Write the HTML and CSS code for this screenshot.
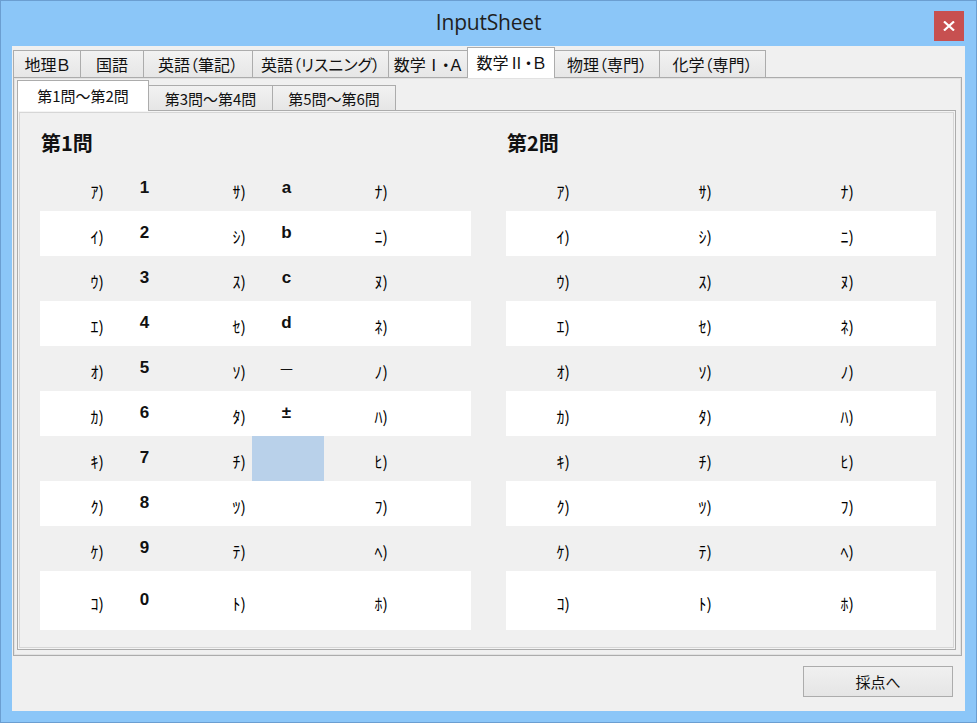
FILE: index.html
```html
<!DOCTYPE html>
<html lang="ja">
<head>
<meta charset="utf-8">
<title>InputSheet</title>
<link rel="stylesheet" href="styles.css">
</head>
<body>
<div class="window">
  <div class="titlebar">
    <div class="title">InputSheet</div>
    <div class="close">
      <svg width="12" height="10" viewBox="0 0 12 10"><path d="M1 0.5 L11 9.5 M11 0.5 L1 9.5" stroke="#fff" stroke-width="2.2" fill="none"/></svg>
    </div>
  </div>
  <div class="client">
    <div class="tabstrip outer">
      <div class="tab">地理Ｂ</div>
      <div class="tab">国語</div>
      <div class="tab">英語（筆記）</div>
      <div class="tab">英語（リスニング）</div>
      <div class="tab">数学Ⅰ・Ａ</div>
      <div class="tab active">数学Ⅱ・Ｂ</div>
      <div class="tab">物理（専門）</div>
      <div class="tab">化学（専門）</div>
    </div>
    <div class="panel">
      <div class="tabstrip inner">
        <div class="itab active">第1問〜第2問</div>
        <div class="itab">第3問〜第4問</div>
        <div class="itab">第5問〜第6問</div>
      </div>
      <div class="ipanel">
        <div class="content">
          <div class="section">
            <h2 class="heading">第1問</h2>
            <div class="table">
              <div class="row"><div class="lab">ｱ)</div><div class="ans">1</div><div class="lab">ｻ)</div><div class="ans">a</div><div class="lab">ﾅ)</div><div class="ans"></div></div>
              <div class="row"><div class="lab">ｲ)</div><div class="ans">2</div><div class="lab">ｼ)</div><div class="ans">b</div><div class="lab">ﾆ)</div><div class="ans"></div></div>
              <div class="row"><div class="lab">ｳ)</div><div class="ans">3</div><div class="lab">ｽ)</div><div class="ans">c</div><div class="lab">ﾇ)</div><div class="ans"></div></div>
              <div class="row"><div class="lab">ｴ)</div><div class="ans">4</div><div class="lab">ｾ)</div><div class="ans">d</div><div class="lab">ﾈ)</div><div class="ans"></div></div>
              <div class="row"><div class="lab">ｵ)</div><div class="ans">5</div><div class="lab">ｿ)</div><div class="ans dash">－</div><div class="lab">ﾉ)</div><div class="ans"></div></div>
              <div class="row"><div class="lab">ｶ)</div><div class="ans">6</div><div class="lab">ﾀ)</div><div class="ans">±</div><div class="lab">ﾊ)</div><div class="ans"></div></div>
              <div class="row"><div class="lab">ｷ)</div><div class="ans">7</div><div class="lab">ﾁ)</div><div class="ans selected"></div><div class="lab">ﾋ)</div><div class="ans"></div></div>
              <div class="row"><div class="lab">ｸ)</div><div class="ans">8</div><div class="lab">ﾂ)</div><div class="ans"></div><div class="lab">ﾌ)</div><div class="ans"></div></div>
              <div class="row"><div class="lab">ｹ)</div><div class="ans">9</div><div class="lab">ﾃ)</div><div class="ans"></div><div class="lab">ﾍ)</div><div class="ans"></div></div>
              <div class="row tall"><div class="lab">ｺ)</div><div class="ans">0</div><div class="lab">ﾄ)</div><div class="ans"></div><div class="lab">ﾎ)</div><div class="ans"></div></div>
            </div>
          </div>
          <div class="section">
            <h2 class="heading">第2問</h2>
            <div class="table">
              <div class="row"><div class="lab">ｱ)</div><div class="ans"></div><div class="lab">ｻ)</div><div class="ans"></div><div class="lab">ﾅ)</div><div class="ans"></div></div>
              <div class="row"><div class="lab">ｲ)</div><div class="ans"></div><div class="lab">ｼ)</div><div class="ans"></div><div class="lab">ﾆ)</div><div class="ans"></div></div>
              <div class="row"><div class="lab">ｳ)</div><div class="ans"></div><div class="lab">ｽ)</div><div class="ans"></div><div class="lab">ﾇ)</div><div class="ans"></div></div>
              <div class="row"><div class="lab">ｴ)</div><div class="ans"></div><div class="lab">ｾ)</div><div class="ans"></div><div class="lab">ﾈ)</div><div class="ans"></div></div>
              <div class="row"><div class="lab">ｵ)</div><div class="ans"></div><div class="lab">ｿ)</div><div class="ans"></div><div class="lab">ﾉ)</div><div class="ans"></div></div>
              <div class="row"><div class="lab">ｶ)</div><div class="ans"></div><div class="lab">ﾀ)</div><div class="ans"></div><div class="lab">ﾊ)</div><div class="ans"></div></div>
              <div class="row"><div class="lab">ｷ)</div><div class="ans"></div><div class="lab">ﾁ)</div><div class="ans"></div><div class="lab">ﾋ)</div><div class="ans"></div></div>
              <div class="row"><div class="lab">ｸ)</div><div class="ans"></div><div class="lab">ﾂ)</div><div class="ans"></div><div class="lab">ﾌ)</div><div class="ans"></div></div>
              <div class="row"><div class="lab">ｹ)</div><div class="ans"></div><div class="lab">ﾃ)</div><div class="ans"></div><div class="lab">ﾍ)</div><div class="ans"></div></div>
              <div class="row tall"><div class="lab">ｺ)</div><div class="ans"></div><div class="lab">ﾄ)</div><div class="ans"></div><div class="lab">ﾎ)</div><div class="ans"></div></div>
            </div>
          </div>
        </div>
      </div>
    </div>
    <div class="footer">
      <button class="btn">採点へ</button>
    </div>
  </div>
</div>
</body>
</html>
```
FILE: styles.css
```css
html, body {
  margin: 0;
  padding: 0;
}
body {
  width: 977px;
  height: 723px;
  overflow: hidden;
  font-family: "Noto Sans CJK JP", "Noto Sans", sans-serif;
  color: #000;
}
.window {
  box-sizing: border-box;
  width: 977px;
  height: 723px;
  background: #8bc6f8;
  border: 1px solid #6b9ed1;
  padding: 0 11px 11px 11px;
  display: flex;
  flex-direction: column;
}
.titlebar {
  height: 45px;
  flex: none;
  display: grid;
  grid-template-columns: 1fr auto 1fr;
  align-items: start;
}
.title {
  grid-column: 2;
  font-family: "Open Sans", "Noto Sans", sans-serif;
  font-size: 21px;
  line-height: 24px;
  margin-top: 9px;
  letter-spacing: -0.2px;
  color: #1f1f1f;
}
.close {
  grid-column: 3;
  justify-self: end;
  width: 30px;
  height: 30px;
  margin-top: 10px;
  margin-right: 1px;
  background: #c75050;
  display: flex;
  align-items: center;
  justify-content: center;
}
.close svg { display: block; }

.client {
  flex: 1;
  background: #f0f0f0;
  padding: 1px 0 0 1px;
  display: flex;
  flex-direction: column;
}

.tabstrip {
  display: flex;
  align-items: flex-end;
  flex: none;
}
.tabstrip.outer { height: 30px; }
.tab, .itab {
  box-sizing: border-box;
  border: 1px solid #acacac;
  border-bottom: none;
  margin-right: -1px;
  background: linear-gradient(#f2f2f2, #e6e6e6);
  display: flex;
  align-items: center;
  justify-content: center;
  line-height: 1;
  white-space: nowrap;
  font-feature-settings: "palt";
  color: #111;
}
.tab { height: 27px; font-size: 16px; }
.tab.active, .itab.active {
  background: #fff;
  position: relative;
  z-index: 1;
  margin-bottom: -1px;
}
.tab.active { height: 31px; padding-bottom: 3px; }
.tab:nth-child(1) { width: 68px; }
.tab:nth-child(2) { width: 64px; }
.tab:nth-child(3) { width: 110px; }
.tab:nth-child(4) { width: 137px; }
.tab:nth-child(5) { width: 80px; }
.tab:nth-child(6) { width: 88px; }
.tab:nth-child(7) { width: 106px; }
.tab:nth-child(8) { width: 107px; }

.panel {
  box-sizing: border-box;
  width: 949px;
  height: 579px;
  flex: none;
  border: 1px solid #acacac;
  box-shadow: inset 0 0 0 1px #e2e2e2;
  background: #f0f0f0;
  padding: 2px 5px 5px 3px;
  display: flex;
  flex-direction: column;
}
.tabstrip.inner { height: 30px; }
.itab { height: 25px; font-size: 15px; }
.itab.active { height: 31px; padding-bottom: 2px; }
.itab:nth-child(1) { width: 132px; }
.itab:nth-child(2) { width: 125px; }
.itab:nth-child(3) { width: 124px; }

.ipanel {
  box-sizing: border-box;
  width: 939px;
  height: 540px;
  border: 1px solid #acacac;
  box-shadow: inset 0 0 0 1px #f4f4f4, inset 0 0 0 2px #d6d6d6;
  background: #f0f0f0;
}
.content {
  display: grid;
  grid-template-columns: 431px 430px;
  column-gap: 35px;
  padding: 19px 0 0 22px;
}
.heading {
  margin: 0 0 10px 1px;
  height: 26px;
  font-size: 20px;
  line-height: 26px;
  font-weight: bold;
  color: #111;
}
.row {
  display: grid;
  grid-template-columns: repeat(6, 71px);
  height: 45px;
}
.row:nth-child(even) { background: #fff; }
.row.tall { height: 59px; }
.lab {
  display: flex;
  align-items: center;
  justify-content: flex-end;
  padding: 4px 7px 0 0;
  font-size: 16px;
  color: #000;
}
.ans {
  display: flex;
  align-items: center;
  justify-content: center;
  padding-right: 4px;
  padding-bottom: 2px;
  font-family: "Liberation Sans", Arial, "Noto Sans CJK JP", sans-serif;
  font-weight: bold;
  font-size: 17px;
  color: #111;
}
.ans.dash { font-weight: normal; font-family: "Noto Sans CJK JP", sans-serif; font-size: 16px; }
.ans.selected { background: #b9d1ea; margin-left: -1px; }

.footer {
  flex: 1;
  display: flex;
  justify-content: flex-end;
  align-items: flex-start;
  padding: 10px 12px 0 0;
}
.btn {
  box-sizing: border-box;
  width: 150px;
  height: 31px;
  border: 1px solid #acacac;
  background: linear-gradient(#f0f0f0, #e5e5e5);
  font-family: "Noto Sans CJK JP", sans-serif;
  font-size: 15px;
  color: #111;
  padding: 0;
}
```
